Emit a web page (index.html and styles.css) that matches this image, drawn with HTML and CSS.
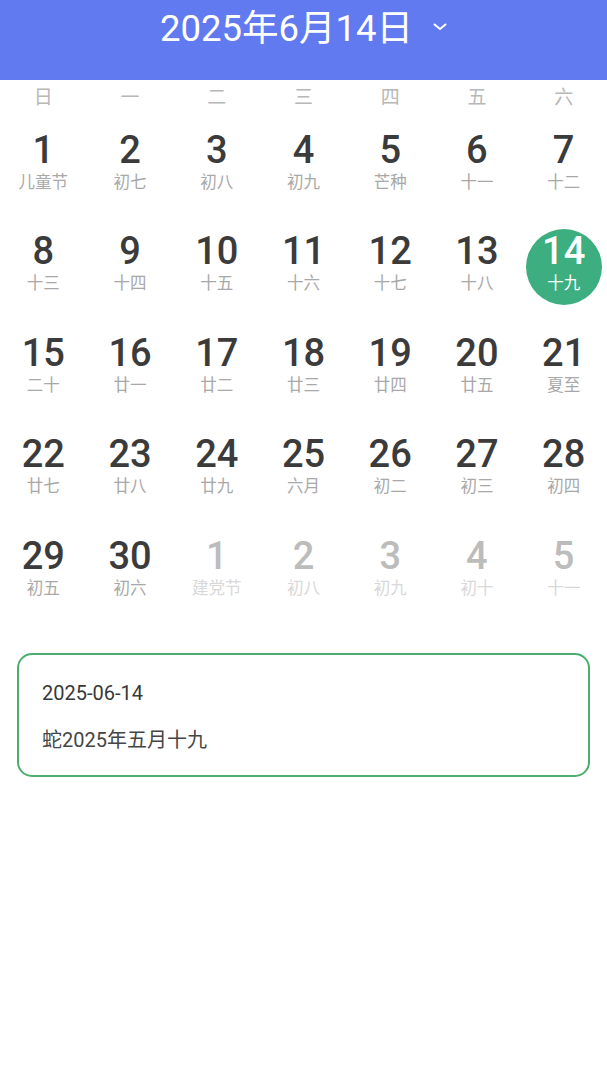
FILE: index.html
```html
<!DOCTYPE html>
<html lang="zh-CN">
<head>
<meta charset="utf-8">
<title>日历</title>
<link rel="stylesheet" href="styles.css">
</head>
<body>
<header class="topbar">
  <div class="title-group">
    <span class="title">2025年6月14日</span>
    <svg class="chevron" width="14" height="8" viewBox="0 0 14 8"><path d="M1.5 1.5 L7 6 L12.5 1.5" fill="none" stroke="#ffffff" stroke-width="2" stroke-linecap="round" stroke-linejoin="round"/></svg>
  </div>
</header>

<div class="weekdays">
  <span>日</span><span>一</span><span>二</span><span>三</span><span>四</span><span>五</span><span>六</span>
</div>

<div class="grid">
  <div class="cell"><span class="num">1</span><span class="lunar">儿童节</span></div>
  <div class="cell"><span class="num">2</span><span class="lunar">初七</span></div>
  <div class="cell"><span class="num">3</span><span class="lunar">初八</span></div>
  <div class="cell"><span class="num">4</span><span class="lunar">初九</span></div>
  <div class="cell"><span class="num">5</span><span class="lunar">芒种</span></div>
  <div class="cell"><span class="num">6</span><span class="lunar">十一</span></div>
  <div class="cell"><span class="num">7</span><span class="lunar">十二</span></div>

  <div class="cell"><span class="num">8</span><span class="lunar">十三</span></div>
  <div class="cell"><span class="num">9</span><span class="lunar">十四</span></div>
  <div class="cell"><span class="num">10</span><span class="lunar">十五</span></div>
  <div class="cell"><span class="num">11</span><span class="lunar">十六</span></div>
  <div class="cell"><span class="num">12</span><span class="lunar">十七</span></div>
  <div class="cell"><span class="num">13</span><span class="lunar">十八</span></div>
  <div class="cell selected"><span class="num">14</span><span class="lunar">十九</span></div>

  <div class="cell"><span class="num">15</span><span class="lunar">二十</span></div>
  <div class="cell"><span class="num">16</span><span class="lunar">廿一</span></div>
  <div class="cell"><span class="num">17</span><span class="lunar">廿二</span></div>
  <div class="cell"><span class="num">18</span><span class="lunar">廿三</span></div>
  <div class="cell"><span class="num">19</span><span class="lunar">廿四</span></div>
  <div class="cell"><span class="num">20</span><span class="lunar">廿五</span></div>
  <div class="cell"><span class="num">21</span><span class="lunar">夏至</span></div>

  <div class="cell"><span class="num">22</span><span class="lunar">廿七</span></div>
  <div class="cell"><span class="num">23</span><span class="lunar">廿八</span></div>
  <div class="cell"><span class="num">24</span><span class="lunar">廿九</span></div>
  <div class="cell"><span class="num">25</span><span class="lunar">六月</span></div>
  <div class="cell"><span class="num">26</span><span class="lunar">初二</span></div>
  <div class="cell"><span class="num">27</span><span class="lunar">初三</span></div>
  <div class="cell"><span class="num">28</span><span class="lunar">初四</span></div>

  <div class="cell"><span class="num">29</span><span class="lunar">初五</span></div>
  <div class="cell"><span class="num">30</span><span class="lunar">初六</span></div>
  <div class="cell other"><span class="num">1</span><span class="lunar">建党节</span></div>
  <div class="cell other"><span class="num">2</span><span class="lunar">初八</span></div>
  <div class="cell other"><span class="num">3</span><span class="lunar">初九</span></div>
  <div class="cell other"><span class="num">4</span><span class="lunar">初十</span></div>
  <div class="cell other"><span class="num">5</span><span class="lunar">十一</span></div>
</div>

<div class="card">
  <div class="card-line">2025-06-14</div>
  <div class="card-line second">蛇2025年五月十九</div>
</div>
</body>
</html>
```

FILE: styles.css
```css
html, body {
  margin: 0;
  padding: 0;
  background: #ffffff;
  font-family: Roboto, "Noto Sans CJK SC", "Noto Sans", sans-serif;
}

.topbar {
  height: 80px;
  background: #627aef;
  display: flex;
  justify-content: center;
  align-items: flex-start;
}

.title-group {
  height: 58px;
  display: flex;
  align-items: center;
  gap: 20px;
}

.title {
  color: #ffffff;
  font-size: 36.5px;
  line-height: 40px;
  font-weight: 400;
}

.chevron {
  display: block;
  margin-top: -4px;
}

.weekdays {
  display: grid;
  grid-template-columns: repeat(7, 1fr);
  height: 34.5px;
  align-items: center;
  text-align: center;
  color: #b8b8b8;
  font-size: 19px;
  line-height: 36px;
}

.grid {
  display: grid;
  grid-template-columns: repeat(7, 1fr);
  grid-auto-rows: 101.5px;
}

.cell {
  position: relative;
  display: flex;
  flex-direction: column;
  align-items: center;
  padding-top: 15px;
  box-sizing: border-box;
}

.cell.selected::before {
  content: "";
  position: absolute;
  left: 50%;
  top: 50%;
  width: 76px;
  height: 76px;
  margin-left: -38px;
  margin-top: -38px;
  border-radius: 50%;
  background: #3cae7f;
}

.num {
  position: relative;
  font-size: 38px;
  line-height: 40px;
  font-weight: 500;
  color: #3b3b3b;
}

.lunar {
  position: relative;
  font-size: 16.5px;
  line-height: 22px;
  margin-top: 2px;
  color: #a8a8a8;
}

.cell.selected .num,
.cell.selected .lunar {
  color: #ffffff;
}

.cell.other .num {
  color: #bcbcbc;
}

.cell.other .lunar {
  color: #d8d8d8;
}

.card {
  margin: 31px 17px 0 17px;
  border: 2px solid #4cae6c;
  border-radius: 15px;
  padding: 24px 23px 21px 23px;
}

.card-line {
  font-size: 20px;
  line-height: 28px;
  color: #383838;
}

.card-line.second {
  margin-top: 19px;
  color: #454545;
}
```
